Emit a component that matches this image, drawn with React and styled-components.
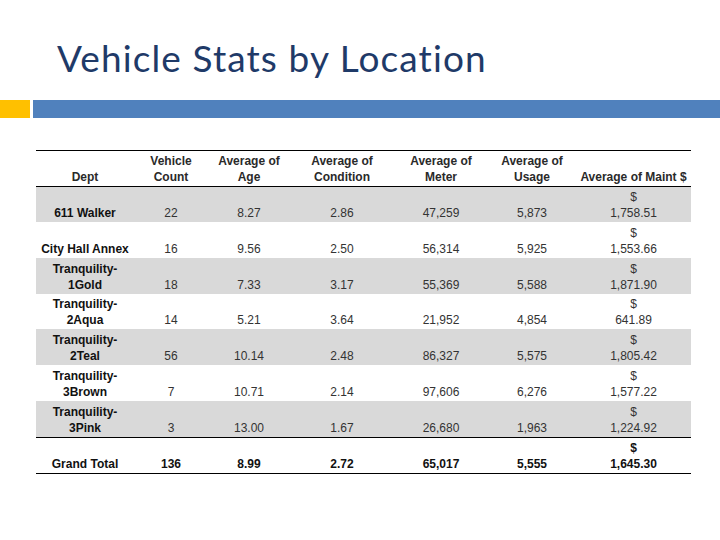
import styled, { createGlobalStyle } from 'styled-components'

const GlobalStyle = createGlobalStyle`
    html, body {
        margin: 0;
        padding: 0;
        background: #ffffff;
    }
    body {
        width: 720px;
        height: 540px;
        overflow: hidden;
    }
`

const Slide = styled.div`
    width: 720px;
    height: 540px;
    display: flex;
    flex-direction: column;
    background: #ffffff;
`

const Title = styled.h1`
    margin: 0;
    padding: 35px 0 0 57px;
    height: 66px;
    box-sizing: border-box;
    font-family: Lato, "Open Sans", sans-serif;
    font-weight: 400;
    font-size: 37px;
    line-height: 46px;
    color: #1f3a68;
    letter-spacing: 1.1px;
    white-space: nowrap;
`

const Rule = styled.div`
    display: flex;
    gap: 3px;
    height: 18px;
    margin-top: 34px;
    .accent {
        width: 30px;
        background: #ffc000;
    }
    .bar {
        flex: 1;
        background: #5081bd;
    }
`

const Table = styled.table`
    margin: 32px 0 0 36px;
    width: 655px;
    border-collapse: collapse;
    table-layout: fixed;
    font-family: "Liberation Sans", Arial, sans-serif;
    font-size: 12px;
    line-height: 16px;
    color: #333333;
    th, td {
        padding: 0 2px 1px;
        text-align: center;
        vertical-align: bottom;
        height: 34.7px;
    }
    thead th {
        border-top: 1px solid #000;
        border-bottom: 1px solid #000;
        height: 33.7px;
        font-weight: 700;
        color: #2a2a2a;
    }
`

const Row = styled.tr`
    background: ${p => (p.$shade ? '#d9d9d9' : '#ffffff')};
    td:first-child {
        font-weight: 700;
        color: #111;
    }
`

const TotalRow = styled.tr`
    td {
        font-weight: 700;
        color: #111;
        border-top: 1px solid #000;
        border-bottom: 1px solid #000;
    }
`

const rows = [
    ['611 Walker', '22', '8.27', '2.86', '47,259', '5,873', '1,758.51'],
    ['City Hall Annex', '16', '9.56', '2.50', '56,314', '5,925', '1,553.66'],
    ['Tranquility-1Gold', '18', '7.33', '3.17', '55,369', '5,588', '1,871.90'],
    ['Tranquility-2Aqua', '14', '5.21', '3.64', '21,952', '4,854', '641.89'],
    ['Tranquility-2Teal', '56', '10.14', '2.48', '86,327', '5,575', '1,805.42'],
    ['Tranquility-3Brown', '7', '10.71', '2.14', '97,606', '6,276', '1,577.22'],
    ['Tranquility-3Pink', '3', '13.00', '1.67', '26,680', '1,963', '1,224.92'],
]

const widths = [98, 74, 82, 104, 94, 88, 115]

function Money({ value }) {
    return (
        <>
            $<br />
            {value}
        </>
    )
}

function Dept({ name }) {
    if (name.startsWith('Tranquility-')) {
        return (
            <>
                Tranquility-<br />
                {name.replace('Tranquility-', '')}
            </>
        )
    }
    return name
}

export default function App() {
    return (
        <Slide>
            <GlobalStyle />
            <Title>Vehicle Stats by Location</Title>
            <Rule>
                <div className="accent" />
                <div className="bar" />
            </Rule>
            <Table>
                <colgroup>
                    {widths.map((w, i) => (
                        <col key={i} style={{ width: w }} />
                    ))}
                </colgroup>
                <thead>
                    <tr>
                        <th>Dept</th>
                        <th>Vehicle<br />Count</th>
                        <th>Average of<br />Age</th>
                        <th>Average of<br />Condition</th>
                        <th>Average of<br />Meter</th>
                        <th>Average of<br />Usage</th>
                        <th>Average of Maint $</th>
                    </tr>
                </thead>
                <tbody>
                    {rows.map((r, i) => (
                        <Row key={r[0]} $shade={i % 2 === 0}>
                            <td><Dept name={r[0]} /></td>
                            <td>{r[1]}</td>
                            <td>{r[2]}</td>
                            <td>{r[3]}</td>
                            <td>{r[4]}</td>
                            <td>{r[5]}</td>
                            <td><Money value={r[6]} /></td>
                        </Row>
                    ))}
                    <TotalRow>
                        <td>Grand Total</td>
                        <td>136</td>
                        <td>8.99</td>
                        <td>2.72</td>
                        <td>65,017</td>
                        <td>5,555</td>
                        <td><Money value="1,645.30" /></td>
                    </TotalRow>
                </tbody>
            </Table>
        </Slide>
    )
}
